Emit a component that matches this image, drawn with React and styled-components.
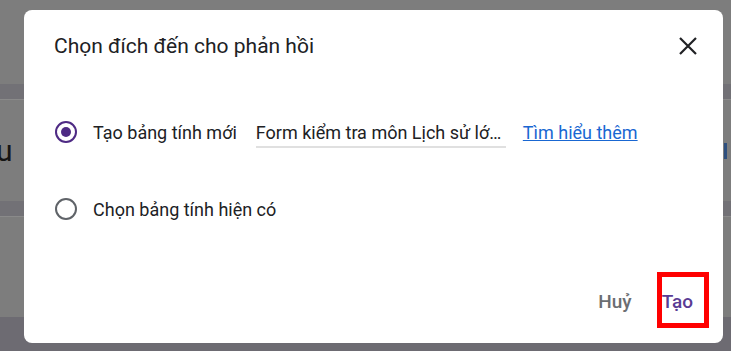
import React from "react";
import styled, { createGlobalStyle } from "styled-components";

const Global = createGlobalStyle`
  html, body { margin: 0; padding: 0; }
  body { width: 731px; height: 351px; overflow: hidden; font-family: Roboto, "Noto Sans", Arial, sans-serif; }
`;

const Page = styled.div`
  position: relative;
  width: 731px;
  height: 351px;
  display: flex;
  flex-direction: column;
  background: #7d7d7d;
  overflow: hidden;
`;

const Area = styled.div`
  height: ${(p) => p.h}px;
  background: ${(p) => p.bg || "#7d7d7d"};
  border-bottom: ${(p) => (p.line ? "1px solid #8a8a8a" : "none")};
  display: flex;
  align-items: center;
  justify-content: space-between;
  flex-shrink: 0;
`;

const BgText = styled.span`
  font-size: 30px;
  color: #151515;
  margin-left: -4px;
  letter-spacing: 6px;
`;

const BlueMark = styled.span`
  width: 3px;
  height: 16px;
  background: #2e4f7e;
  margin-right: 4px;
`;

const Dialog = styled.div`
  position: absolute;
  left: 24px;
  top: 10px;
  width: 699px;
  height: 333px;
  background: #fff;
  border-radius: 8px;
  box-sizing: border-box;
  display: flex;
  flex-direction: column;
  padding: 0 30px 0 30px;
`;

const Header = styled.div`
  display: flex;
  align-items: center;
  justify-content: space-between;
  height: 72px;
`;

const Title = styled.h2`
  margin: 0;
  font-weight: 400;
  font-size: 21px;
  color: #202124;
`;

const CloseBtn = styled.button`
  border: 0;
  background: none;
  padding: 0;
  margin-right: -5px;
  width: 20px;
  height: 20px;
  display: flex;
  align-items: center;
  justify-content: center;
  cursor: pointer;
`;

const Options = styled.div`
  display: flex;
  flex-direction: column;
  margin-top: 39px;
  gap: 55px;
`;

const Option = styled.label`
  display: flex;
  align-items: center;
  height: 22px;
  font-size: 18px;
  color: #202124;
`;

const Radio = styled.span`
  width: 22px;
  height: 22px;
  box-sizing: border-box;
  border-radius: 50%;
  border: 2px solid ${(p) => (p.checked ? "#4e2a84" : "#5f6368")};
  display: flex;
  align-items: center;
  justify-content: center;
  margin-left: 1px;
  margin-right: 16px;
  &::after {
    content: "";
    width: 10px;
    height: 10px;
    border-radius: 50%;
    background: #4e2a84;
    display: ${(p) => (p.checked ? "block" : "none")};
  }
`;

const NameField = styled.div`
  margin-left: 19px;
  width: 250px;
  height: 32px;
  box-sizing: border-box;
  border-bottom: 2px solid #e0e0e0;
  display: flex;
  align-items: center;
  padding-top: 2px;
  font-size: 18px;
  color: #202124;
  white-space: nowrap;
  overflow: hidden;
`;

const Link = styled.a`
  margin-left: 17px;
  color: #1967d2;
  text-decoration: underline;
  font-size: 18px;
`;

const Footer = styled.div`
  margin-top: auto;
  display: flex;
  justify-content: flex-end;
  align-items: center;
  gap: 30px;
  height: 80px;
  padding-bottom: 4px;
  box-sizing: border-box;
`;

const TextButton = styled.button`
  border: 0;
  background: none;
  padding: 0;
  font-family: inherit;
  font-size: 19px;
  font-weight: 500;
  color: ${(p) => (p.primary ? "#5a3b94" : "#6b6e72")};
  cursor: pointer;
`;

const Highlight = styled.div`
  position: absolute;
  left: 657px;
  top: 272px;
  width: 52px;
  height: 56px;
  box-sizing: border-box;
  border: 5px solid #ff0000;
  pointer-events: none;
`;

export default function App() {
  return (
    <>
      <Global />
      <Page>
        <Area h={84} />
        <Area h={15} bg="#727176" line />
        <Area h={101}>
          <BgText>u T</BgText>
          <BlueMark />
        </Area>
        <Area h={15} bg="#727176" line />
        <Area h={100} />
        <Area h={36} bg="#6d6b72" />
        <Dialog role="dialog">
          <Header>
            <Title>Chọn đích đến cho phản hồi</Title>
            <CloseBtn aria-label="Đóng">
              <svg width="20" height="20" viewBox="0 0 20 20">
                <path d="M2 2 L18 18 M18 2 L2 18" stroke="#202124" strokeWidth="2.2" fill="none" />
              </svg>
            </CloseBtn>
          </Header>
          <Options>
            <Option>
              <Radio checked />
              Tạo bảng tính mới
              <NameField>Form kiểm tra môn Lịch sử lớ…</NameField>
              <Link href="#">Tìm hiểu thêm</Link>
            </Option>
            <Option>
              <Radio />
              Chọn bảng tính hiện có
            </Option>
          </Options>
          <Footer>
            <TextButton>Huỷ</TextButton>
            <TextButton primary>Tạo</TextButton>
          </Footer>
        </Dialog>
        <Highlight />
      </Page>
    </>
  );
}
